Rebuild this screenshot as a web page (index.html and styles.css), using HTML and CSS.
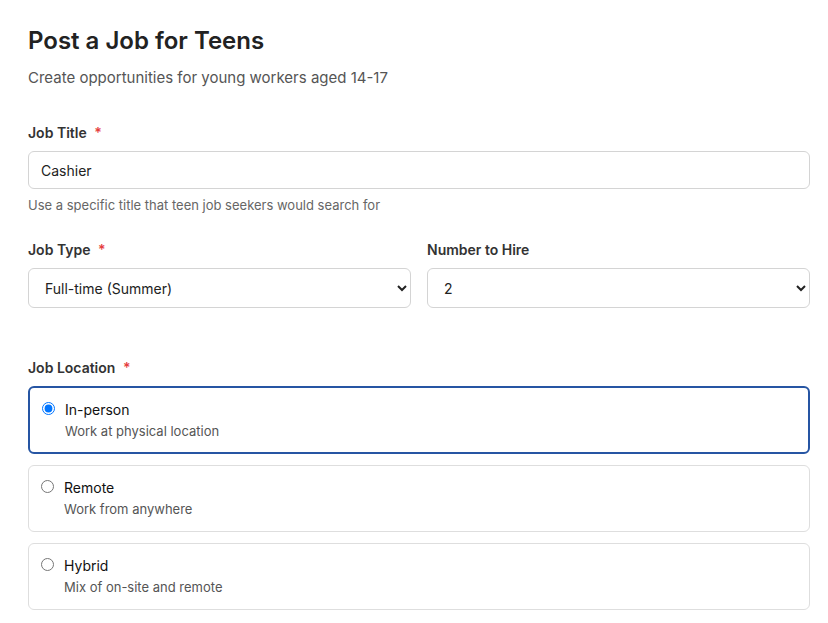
FILE: index.html
```html
<!DOCTYPE html>
<html lang="en">
<head>
<meta charset="utf-8">
<title>Post a Job for Teens</title>
<link rel="stylesheet" href="styles.css">
</head>
<body>
<main class="page">
  <h1 class="title">Post a Job for Teens</h1>
  <p class="subtitle">Create opportunities for young workers aged 14-17</p>

  <div class="field field-title">
    <label class="label" for="jobTitle">Job Title <span class="req">*</span></label>
    <input class="input" id="jobTitle" type="text" value="Cashier">
    <p class="help">Use a specific title that teen job seekers would search for</p>
  </div>

  <div class="row">
    <div class="field">
      <label class="label" for="jobType">Job Type <span class="req">*</span></label>
      <select class="select" id="jobType">
        <option>Full-time (Summer)</option>
        <option>Part-time</option>
      </select>
    </div>
    <div class="field">
      <label class="label" for="hire">Number to Hire</label>
      <select class="select" id="hire">
        <option>1</option>
        <option selected>2</option>
        <option>3</option>
      </select>
    </div>
  </div>

  <div class="field field-location">
    <div class="label">Job Location <span class="req">*</span></div>
    <div class="options">
      <label class="option selected">
        <input type="radio" name="loc" class="radio" checked>
        <span class="option-text">
          <span class="option-title">In-person</span>
          <span class="option-desc">Work at physical location</span>
        </span>
      </label>
      <label class="option">
        <input type="radio" name="loc" class="radio">
        <span class="option-text">
          <span class="option-title">Remote</span>
          <span class="option-desc">Work from anywhere</span>
        </span>
      </label>
      <label class="option">
        <input type="radio" name="loc" class="radio">
        <span class="option-text">
          <span class="option-title">Hybrid</span>
          <span class="option-desc">Mix of on-site and remote</span>
        </span>
      </label>
    </div>
  </div>
</main>
</body>
</html>
```

FILE: styles.css
```css
* { box-sizing: border-box; }

html, body {
  margin: 0;
  padding: 0;
  background: #ffffff;
}

body {
  font-family: Inter, "Noto Sans", "Liberation Sans", sans-serif;
  color: #222222;
}

.page {
  width: 782px;
  margin-left: 28px;
  padding-top: 26px;
}

.title {
  margin: 0;
  font-size: 24px;
  line-height: 30px;
  font-weight: 600;
  color: #222222;
}

.subtitle {
  margin: 11px 0 0;
  font-size: 15px;
  line-height: 22px;
  color: #555555;
}

.field-title {
  margin-top: 34px;
}

.label {
  display: block;
  font-size: 14px;
  line-height: 20px;
  font-weight: 600;
  color: #333333;
  margin-bottom: 8px;
}

.req {
  color: #e53e3e;
  margin-left: 4px;
}

.input {
  display: block;
  width: 100%;
  height: 38px;
  padding: 0 12px;
  font-family: inherit;
  font-size: 14px;
  color: #222222;
  border: 1px solid #d4d4d4;
  border-radius: 6px;
  background: #ffffff;
  outline: none;
}

.help {
  margin: 7px 0 0;
  font-size: 13px;
  line-height: 18px;
  color: #666666;
}

.row {
  margin-top: 26px;
  display: grid;
  grid-template-columns: 1fr 1fr;
  column-gap: 16px;
}

.select {
  display: block;
  width: 100%;
  height: 40px;
  padding: 0 8px 0 12px;
  font-family: inherit;
  font-size: 14px;
  color: #222222;
  border: 1px solid #d4d4d4;
  border-radius: 6px;
  background: #ffffff;
}

.field-location {
  margin-top: 50px;
}

.options {
  display: flex;
  flex-direction: column;
  gap: 11px;
}

.option {
  display: flex;
  align-items: flex-start;
  gap: 10px;
  padding: 12px 12px 13px;
  border: 1px solid #dedede;
  border-radius: 6px;
  cursor: pointer;
}

.option.selected {
  border: 2px solid #2655a3;
  padding: 12px;
}

.radio {
  margin: 2px 0 0;
  width: 13px;
  height: 13px;
  flex: none;
}

.option-text {
  display: flex;
  flex-direction: column;
  gap: 2px;
}

.option-title {
  font-size: 14px;
  line-height: 20px;
  font-weight: 400;
  color: #111111;
}

.option-desc {
  font-size: 13px;
  line-height: 18px;
  color: #555555;
}
```
